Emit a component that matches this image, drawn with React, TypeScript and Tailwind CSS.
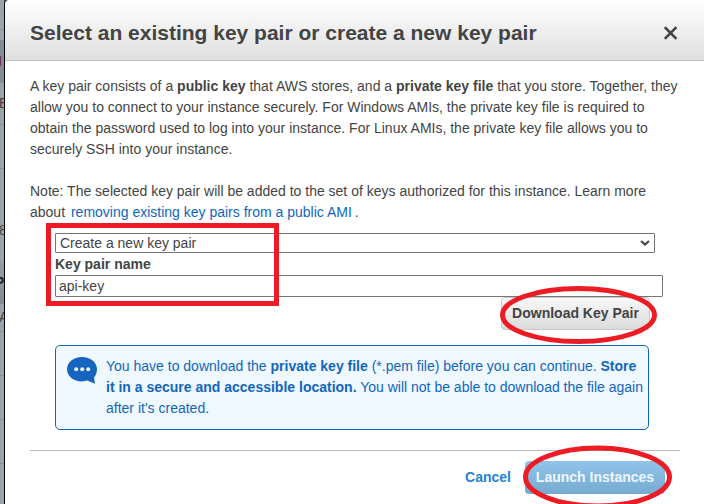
import type { ReactNode } from "react";

// Slice of the dimmed page visible at the left of the dialog.
const backdropRows = [
  { h: "h-[30px]", bg: "bg-[#9ba3ab]", line: true, mark: "", cls: "" },
  { h: "h-[10px]", bg: "bg-[#9ba3ab]", line: false, mark: "", cls: "" },
  { h: "h-[43px]", bg: "bg-[#838b93]", line: true, mark: "I", cls: "text-[#6b3039] font-bold -ml-[2px]" },
  { h: "h-[42px]", bg: "bg-[#9ba3ab]", line: true, mark: "E", cls: "text-[#4d3b42] -ml-[1px]" },
  { h: "h-[44px]", bg: "bg-[#9ba3ab]", line: true, mark: "", cls: "" },
  { h: "h-[43px]", bg: "bg-[#9ba3ab]", line: false, mark: "", cls: "" },
  { h: "h-[36px]", bg: "bg-[#9ba3ab]", line: false, mark: "8", cls: "text-[#444] -ml-[1px]" },
  { h: "h-[14px]", bg: "bg-[#9ba3ab]", line: false, mark: "", cls: "" },
  { h: "h-[42px]", bg: "bg-linear-to-b from-[#959da5] to-[#838b93]", line: false, mark: "P", cls: "text-[#222] font-bold -ml-[5px] -mt-[2px]" },
  { h: "h-[28px]", bg: "bg-[#9ba3ab]", line: true, mark: "A", cls: "text-[#444] -ml-[1px]" },
  { h: "h-[44px]", bg: "bg-[#9ba3ab]", line: true, mark: "", cls: "" },
  { h: "h-[44px]", bg: "bg-[#9ba3ab]", line: true, mark: "", cls: "" },
  { h: "h-[44px]", bg: "bg-[#9ba3ab]", line: true, mark: "", cls: "" },
  { h: "h-[40px]", bg: "bg-[#9ba3ab]", line: false, mark: "", cls: "" },
];

function Line({ children }: { children: ReactNode }) {
  return <span className="block whitespace-nowrap">{children}</span>;
}

function Ring({ className, rx, ry, cx, cy }: { className: string; rx: number; ry: number; cx: number; cy: number }) {
  return (
    <svg className={`absolute overflow-visible pointer-events-none ${className}`} width={cx * 2} height={cy * 2}>
      <ellipse cx={cx} cy={cy} rx={rx} ry={ry} fill="none" stroke="#ed1c24" strokeWidth="5" />
    </svg>
  );
}

export default function App() {
  return (
    <div className="relative flex h-[504px] w-[704px] overflow-hidden bg-[#444] font-['Liberation_Sans',Arial,sans-serif] text-[14px] leading-[21px] text-[#444]">
      <div className="flex w-[4px] shrink-0 flex-col overflow-hidden">
        {backdropRows.map((r, i) => (
          <div key={i} className={`flex shrink-0 items-center overflow-hidden ${r.h} ${r.bg} ${r.line ? "border-b border-[#899199]" : ""}`}>
            <span className={r.cls}>{r.mark}</span>
          </div>
        ))}
      </div>

      <div className="flex w-[700px] flex-col overflow-hidden rounded-tl-[5px] border-l border-black bg-white">
        <header className="flex h-[61px] shrink-0 items-center justify-between border-b border-[#c1c1c1] bg-linear-to-b from-white to-[#dfdfdf] pr-[26px] pl-[25px] pt-[6px]">
          <h1 className="whitespace-nowrap text-[21px] leading-[28px] font-bold">Select an existing key pair or create a new key pair</h1>
          <svg width="14" height="14" viewBox="0 0 14 14" stroke="#444" strokeWidth="2.6" fill="none">
            <path d="M.8 1.200 12.400 12.800M12.400 1.200 .8 12.800" />
          </svg>
        </header>

        <main className="flex flex-col pl-[25px]">
          <p className="mt-[15px]">
            <Line>A key pair consists of a <b>public key</b> that AWS stores, and a <b>private key file</b> that you store. Together, they</Line>
            <Line>allow you to connect to your instance securely. For Windows AMIs, the private key file is required to</Line>
            <Line>obtain the password used to log into your instance. For Linux AMIs, the private key file allows you to</Line>
            <Line>securely SSH into your instance.</Line>
          </p>
          <p className="mt-[21px]">
            <Line>Note: The selected key pair will be added to the set of keys authorized for this instance. Learn more</Line>
            <Line>about <a className="ml-[2px] mr-[3px] text-[#1166bb]">removing existing key pairs from a public AMI</a>.</Line>
          </p>

          <div className="mt-[10px] ml-[25px] flex flex-col items-start">
            <div className="flex h-[20px] w-[600px] items-center justify-between rounded-[1px] border border-[#767676] pl-[4px] pr-[4px]">
              <span className="whitespace-nowrap">Create a new key pair</span>
              <svg width="10" height="6" viewBox="0 0 10 6" fill="none" stroke="#444" strokeWidth="2">
                <path d="M1 1 5 4.6 9 1" />
              </svg>
            </div>
            <label className="mt-px font-bold leading-[21px]">Key pair name</label>
            <div className="flex h-[22px] w-[608px] items-center rounded-[1px] border border-[#767676] pl-[3px]">api-key</div>
            <button className="ml-[446px] flex h-[33px] w-[149px] items-center justify-center whitespace-nowrap rounded-[4px] border border-[#c9c9c9] bg-linear-to-b from-[#f8f8f8] to-[#dcdcdc] font-bold">
              Download Key Pair
            </button>
          </div>

          <div className="mt-[15px] ml-[25px] flex h-[85px] w-[594px] rounded-[5px] border border-[#1166bb] bg-[#f0f8ff] pt-[10px] pl-[11px] text-[#1166bb]">
            <svg className="mt-[1px] mr-[9px] shrink-0" width="30" height="27" viewBox="0 0 30 27">
              <path fill="#1565c0" d="M15 0C6.7 0 0 5.3 0 12.2S6.7 24.4 15 24.4c1.8 0 3.6-.3 5.3-.8l7.7 3.2-1-6.4c1.900-2.200 3-5 3-8.200C30 5.300 23.300 0 15 0Z" />
              <g fill="#f0f8ff"><circle cx="9.200" cy="12.200" r="2" /><circle cx="15.200" cy="12.200" r="2" /><circle cx="21.200" cy="12.200" r="2" /></g>
            </svg>
            <p>
              <Line>You have to download the <b>private key file</b> (*.pem file) before you can continue. <b>Store</b></Line>
              <Line><b>it in a secure and accessible location.</b> You will not be able to download the file again</Line>
              <Line>after it's created.</Line>
            </p>
          </div>

          <footer className="mt-[20px] flex w-[650px] items-start justify-end border-t border-[#b8b8b8] pt-[10px] pr-[15px] font-bold">
            <button className="mr-[14px] leading-[33px] text-[#1f83d5]">Cancel</button>
            <button className="h-[33px] w-[140px] whitespace-nowrap rounded-[4px] bg-linear-to-b from-[#91c4ea] to-[#77aacf] text-[#edf6fc]">Launch Instances</button>
          </footer>
        </main>
      </div>

      <div className="pointer-events-none absolute top-[223px] left-[46px] h-[83px] w-[233px] border-5 border-[#ed1c24]" />
      <Ring className="left-[500px] top-[286px]" cx={78.5} cy={29} rx={76} ry={26.500} />
      <Ring className="left-[523px] top-[445px]" cx={74.500} cy={32} rx={72} ry={29} />
    </div>
  );
}
